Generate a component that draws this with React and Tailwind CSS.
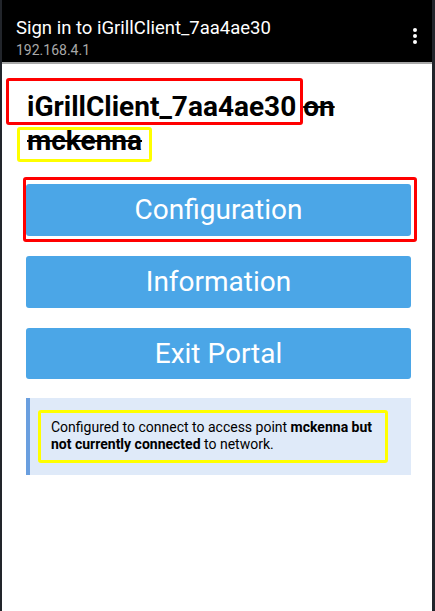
export default function App() {
  return (
    <div
      className="relative flex w-[435px] h-[611px] bg-[#22252b] overflow-hidden"
      style={{ fontFamily: "Roboto, 'Liberation Sans', sans-serif" }}
    >
      <div className="ml-[2px] mr-[3px] flex-1 flex flex-col bg-white">
        <div className="h-[64px] bg-black flex items-start pt-[16px] pl-[14px] pr-[15px] border-b-[2px] border-[#a8a8a8]">
          <div className="flex-1 flex flex-col">
            <div className="text-[18.5px] leading-[24px] text-white">Sign in to iGrillClient_7aa4ae30</div>
            <div className="text-[14px] leading-[18px] text-[#a9a9a9] mt-[1px]">192.168.4.1</div>
          </div>
          <div className="flex flex-col gap-[2px] items-center mt-[12px]">
            <span className="block w-[4px] h-[4px] rounded-full bg-white" />
            <span className="block w-[4px] h-[4px] rounded-full bg-white" />
            <span className="block w-[4px] h-[4px] rounded-full bg-white" />
          </div>
        </div>
        <div className="flex flex-col pl-[24px] pr-[21px]">
          <h1 className="mt-[26px] ml-[1px] text-[28px] leading-[34px] font-bold text-black">
            iGrillClient_7aa4ae30 <s>on mckenna</s>
          </h1>
          <div className="mt-[26px] flex flex-col gap-[20px]">
            <button className="h-[52px] w-full rounded-[3px] bg-[#4ba6e7] text-white text-[28px] leading-none">
              Configuration
            </button>
            <button className="h-[52px] w-full rounded-[3px] bg-[#4ba6e7] text-white text-[28px] leading-none">
              Information
            </button>
            <button className="h-[51px] w-full rounded-[3px] bg-[#4ba6e7] text-white text-[28px] leading-none">
              Exit Portal
            </button>
          </div>
          <div className="mt-[19px] bg-[#dfeaf9] border-l-[4px] border-[#6a9fdf] pl-[21px] pr-[21px] pt-[21px] pb-[22px] text-[14px] leading-[17px] text-black">
            Configured to connect to access point <b>mckenna but not currently connected</b> to network.
          </div>
        </div>
      </div>

      <div className="absolute left-[6px] top-[78px] w-[297px] h-[47px] border-[3px] border-[#ff0000] rounded-[3px]" />
      <div className="absolute left-[17px] top-[127px] w-[135px] h-[35px] border-[3px] border-[#ffff00] rounded-[3px]" />
      <div className="absolute left-[23px] top-[177px] w-[394px] h-[65px] border-[3px] border-[#ff0000] rounded-[3px]" />
      <div className="absolute left-[38px] top-[410px] w-[350px] h-[53px] border-[3px] border-[#ffff00] rounded-[3px]" />
    </div>
  );
}
